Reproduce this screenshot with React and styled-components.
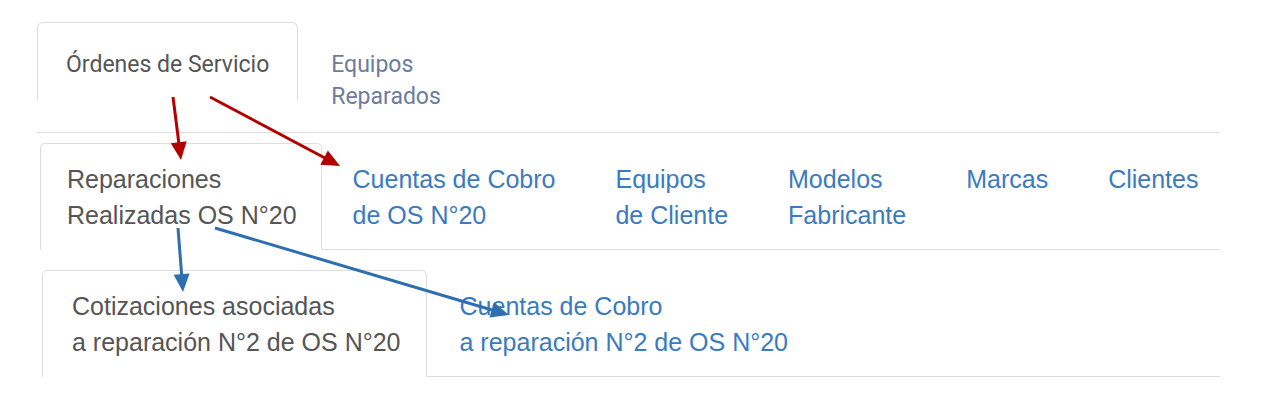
import React from "react";
import styled, { createGlobalStyle, css } from "styled-components";

const GlobalStyle = createGlobalStyle`
  html, body {
    margin: 0;
    padding: 0;
    background: #fff;
  }
  body {
    font-family: "Liberation Sans", Arial, sans-serif;
  }
`;

const Page = styled.div`
  position: relative;
  width: 1276px;
  height: 411px;
  box-sizing: border-box;
  padding: 22px 56px 0 37px;
  overflow: hidden;
`;

const TabBar = styled.ul`
  display: flex;
  align-items: flex-start;
  list-style: none;
  margin: ${({ $top }) => $top || 0}px 0 0 ${({ $left }) => $left || 0}px;
  padding: 0;
  border-bottom: 1px solid #dddddd;
`;

const TabItem = styled.li`
  margin: 0 2px -1px 0;
`;

const TabLink = styled.a`
  display: block;
  box-sizing: border-box;
  border: 1px solid transparent;
  border-radius: ${({ $radius }) => $radius}px ${({ $radius }) => $radius}px 0 0;
  padding: ${({ $pad }) => $pad};
  font-family: ${({ $font }) => $font};
  font-size: ${({ $size }) => $size}px;
  line-height: ${({ $lh }) => $lh}px;
  color: ${({ $color }) => $color};
  text-decoration: none;
  white-space: nowrap;
  cursor: pointer;

  ${({ $active }) =>
    $active &&
    css`
      color: #555555;
      background: #fff;
      border-color: #dddddd #dddddd transparent;
    `}
`;

const Overlay = styled.svg`
  position: absolute;
  top: 0;
  left: 0;
  pointer-events: none;
`;

const rows = [
  {
    top: 0,
    left: 0,
    font: `Roboto, "Liberation Sans", sans-serif`,
    size: 23,
    lh: 32,
    radius: 6,
    color: "#6c7c9e",
    tabs: [
      { lines: ["Órdenes de Servicio"], active: true, pad: "26px 28px 19px 28px" },
      { lines: ["Equipos", "Reparados"], pad: "26px 30px 19px 30px" },
    ],
  },
  {
    top: 10,
    left: 3,
    font: `"Liberation Sans", Arial, sans-serif`,
    size: 25,
    lh: 36,
    radius: 5,
    color: "#3a7bbf",
    tabs: [
      { lines: ["Reparaciones", "Realizadas OS N°20"], active: true, pad: "17px 24px 16px 26px" },
      { lines: ["Cuentas de Cobro", "de OS N°20"], pad: "17px 28px 16px 28px" },
      { lines: ["Equipos", "de Cliente"], pad: "17px 28px 16px 28px" },
      { lines: ["Modelos", "Fabricante"], pad: "17px 28px 16px 28px" },
      { lines: ["Marcas"], pad: "17px 28px 16px 28px" },
      { lines: ["Clientes"], pad: "17px 28px 16px 28px" },
    ],
  },
  {
    top: 20,
    left: 5,
    font: `"Liberation Sans", Arial, sans-serif`,
    size: 25,
    lh: 36,
    radius: 5,
    color: "#3a7bbf",
    tabs: [
      { lines: ["Cotizaciones asociadas", "a reparación N°2 de OS N°20"], active: true, pad: "17px 25px 16px 29px" },
      { lines: ["Cuentas de Cobro", "a reparación N°2 de OS N°20"], pad: "17px 30px 16px 30px" },
    ],
  },
];

const arrows = [
  { from: [173, 97], to: [181, 160], color: "#b20000" },
  { from: [210, 97], to: [340, 166], color: "#b20000" },
  { from: [178, 228], to: [183, 292], color: "#2e6fb0" },
  { from: [215, 228], to: [509, 315], color: "#2e6fb0" },
];

function Arrow({ from, to, color }) {
  const [x1, y1] = from;
  const [x2, y2] = to;
  const dx = x2 - x1;
  const dy = y2 - y1;
  const len = Math.hypot(dx, dy);
  const ux = dx / len;
  const uy = dy / len;
  const head = 18;
  const half = 8;
  const bx = x2 - ux * head;
  const by = y2 - uy * head;
  const pts = [
    [x2, y2],
    [bx - uy * half, by + ux * half],
    [bx + uy * half, by - ux * half],
  ]
    .map((p) => p.join(","))
    .join(" ");
  return (
    <g>
      <line x1={x1} y1={y1} x2={bx + ux * 2} y2={by + uy * 2} stroke={color} strokeWidth="3" />
      <polygon points={pts} fill={color} />
    </g>
  );
}

export default function App() {
  return (
    <>
      <GlobalStyle />
      <Page>
        {rows.map((row, ri) => (
          <TabBar key={ri} $top={row.top} $left={row.left}>
            {row.tabs.map((tab, ti) => (
              <TabItem key={ti}>
                <TabLink
                  $active={tab.active}
                  $pad={tab.pad}
                  $font={row.font}
                  $size={row.size}
                  $lh={row.lh}
                  $radius={row.radius}
                  $color={row.color}
                >
                  {tab.lines.map((line, li) => (
                    <React.Fragment key={li}>
                      {li > 0 && <br />}
                      {line}
                    </React.Fragment>
                  ))}
                </TabLink>
              </TabItem>
            ))}
          </TabBar>
        ))}
        <Overlay width="1276" height="411" viewBox="0 0 1276 411">
          {arrows.map((a, i) => (
            <Arrow key={i} {...a} />
          ))}
        </Overlay>
      </Page>
    </>
  );
}
